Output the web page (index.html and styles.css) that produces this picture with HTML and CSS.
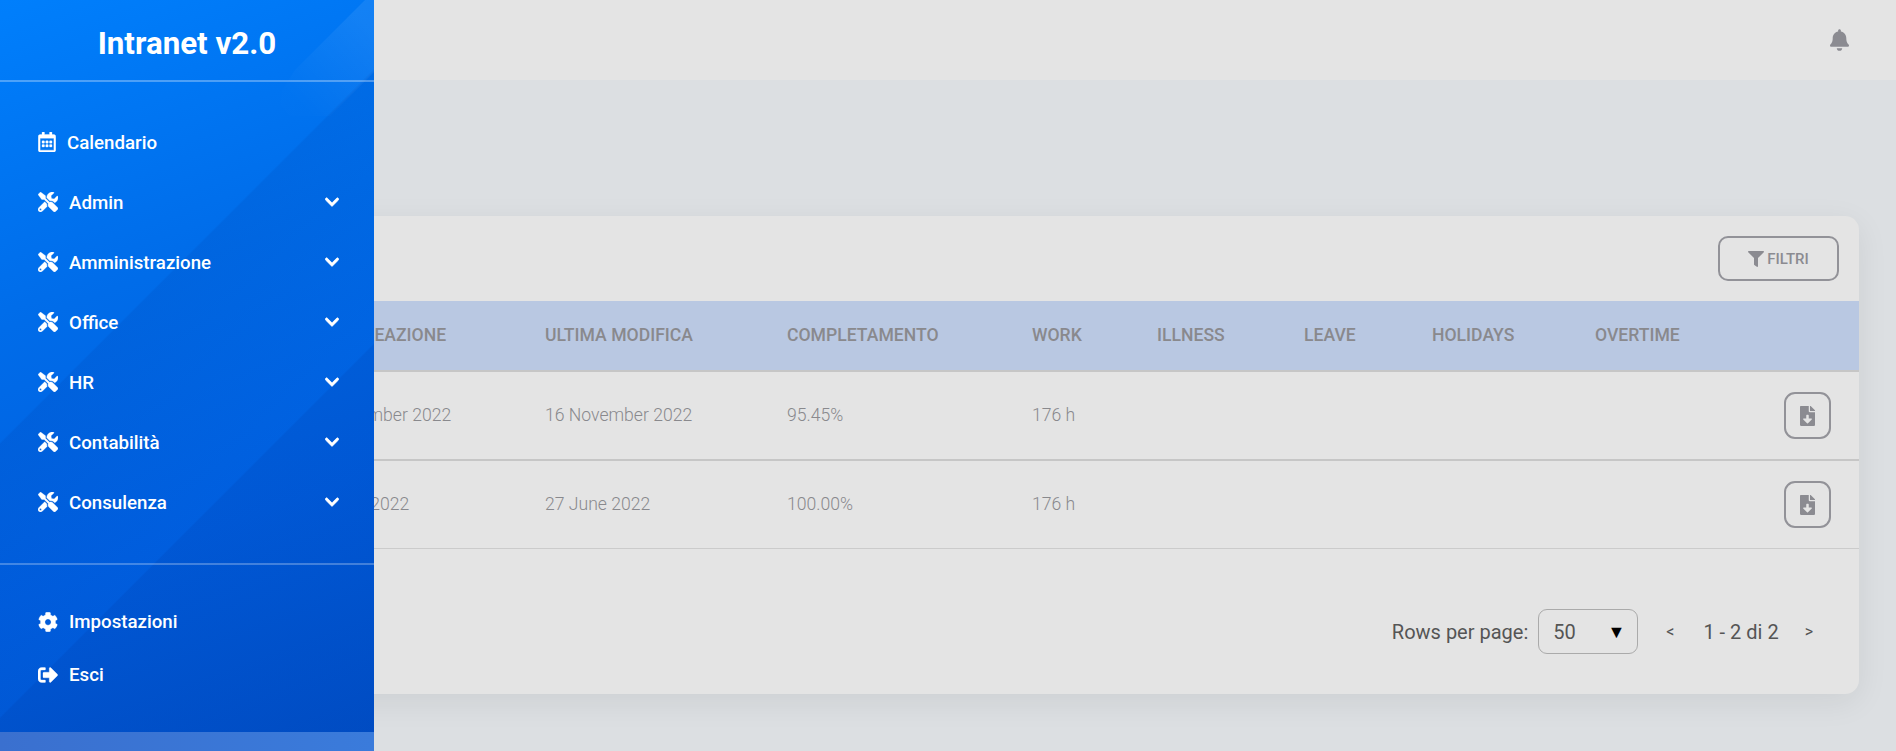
FILE: index.html
```html
<!DOCTYPE html>
<html lang="it">
<head>
<meta charset="utf-8">
<title>Intranet v2.0</title>
<link rel="stylesheet" href="styles.css">
</head>
<body>
<svg class="defs" aria-hidden="true">
  <symbol id="i-cal" viewBox="0 0 448 512"><path d="M148 288h-40c-6.6 0-12-5.4-12-12v-40c0-6.6 5.4-12 12-12h40c6.6 0 12 5.4 12 12v40c0 6.6-5.4 12-12 12zm108-12v-40c0-6.6-5.4-12-12-12h-40c-6.6 0-12 5.4-12 12v40c0 6.6 5.4 12 12 12h40c6.6 0 12-5.4 12-12zm96 0v-40c0-6.6-5.4-12-12-12h-40c-6.6 0-12 5.4-12 12v40c0 6.6 5.4 12 12 12h40c6.6 0 12-5.4 12-12zm-96 96v-40c0-6.6-5.4-12-12-12h-40c-6.6 0-12 5.4-12 12v40c0 6.6 5.4 12 12 12h40c6.6 0 12-5.4 12-12zm-96 0v-40c0-6.6-5.4-12-12-12h-40c-6.6 0-12 5.4-12 12v40c0 6.6 5.4 12 12 12h40c6.6 0 12-5.4 12-12zm192 0v-40c0-6.6-5.4-12-12-12h-40c-6.6 0-12 5.4-12 12v40c0 6.6 5.4 12 12 12h40c6.6 0 12-5.4 12-12zm96-260v352c0 26.5-21.5 48-48 48H48c-26.5 0-48-21.5-48-48V112c0-26.5 21.5-48 48-48h48V12c0-6.6 5.4-12 12-12h40c6.6 0 12 5.4 12 12v52h128V12c0-6.6 5.4-12 12-12h40c6.6 0 12 5.4 12 12v52h48c26.5 0 48 21.5 48 48zm-48 346V160H48v298c0 3.3 2.7 6 6 6h340c3.3 0 6-2.7 6-6z"/></symbol>
  <symbol id="i-tools" viewBox="0 0 512 512"><path d="M501.1 395.7L384 278.6c-23.1-23.1-57.6-27.6-85.4-13.9L192 158.1V96L64 0 0 64l96 128h62.1l106.6 106.6c-13.6 27.8-9.2 62.3 13.9 85.4l117.1 117.1c14.6 14.6 38.2 14.6 52.7 0l52.7-52.7c14.5-14.6 14.5-38.2 0-52.7zM331.7 225c28.3 0 54.9 11 74.9 31l19.4 19.4c15.8-6.9 30.8-16.5 43.8-29.5 37.1-37.1 49.7-89.3 37.9-136.7-2.2-9-13.5-12.1-20.1-5.5l-74.4 74.4-67.9-11.3L334 98.9l74.4-74.4c6.6-6.6 3.4-17.9-5.7-20.2-47.4-11.7-99.6.9-136.6 37.9-28.5 28.5-41.9 66.1-41.2 103.6l82.1 82.1c8.1-1.9 16.5-2.9 24.7-2.9zm-103.9 82l-56.7-56.7L18.7 402.8c-25 25-25 65.5 0 90.5s65.5 25 90.5 0l123.6-123.6c-7.6-19.9-9.9-41.6-5-62.7zM64 472c-13.2 0-24-10.8-24-24 0-13.3 10.7-24 24-24s24 10.7 24 24c0 13.2-10.7 24-24 24z"/></symbol>
  <symbol id="i-chev" viewBox="0 0 448 512"><path d="M207.029 381.476L12.686 187.132c-9.373-9.373-9.373-24.569 0-33.941l22.667-22.667c9.357-9.357 24.522-9.375 33.901-.04L224 284.505l154.745-154.021c9.379-9.335 24.544-9.317 33.901.04l22.667 22.667c9.373 9.373 9.373 24.569 0 33.941L240.971 381.476c-9.373 9.372-24.569 9.372-33.942 0z"/></symbol>
  <symbol id="i-cog" viewBox="0 0 512 512"><path d="M487.4 315.7l-42.6-24.6c4.3-23.2 4.3-47 0-70.2l42.6-24.6c4.9-2.8 7.1-8.6 5.5-14-11.1-35.6-30-67.8-54.7-94.6-3.8-4.1-10-5.1-14.8-2.3L380.8 110c-17.9-15.4-38.5-27.3-60.8-35.1V25.8c0-5.6-3.9-10.5-9.4-11.7-36.7-8.2-74.3-7.8-109.2 0-5.5 1.2-9.4 6.1-9.4 11.7V75c-22.2 7.9-42.8 19.8-60.8 35.1L88.7 85.5c-4.9-2.8-11-1.9-14.8 2.3-24.7 26.7-43.6 58.9-54.7 94.6-1.7 5.4.6 11.2 5.5 14L67.3 221c-4.3 23.2-4.3 47 0 70.2l-42.6 24.6c-4.9 2.8-7.1 8.6-5.5 14 11.1 35.6 30 67.8 54.7 94.6 3.8 4.1 10 5.1 14.8 2.3l42.6-24.6c17.9 15.4 38.5 27.3 60.8 35.1v49.2c0 5.6 3.9 10.5 9.4 11.7 36.7 8.2 74.3 7.8 109.2 0 5.5-1.2 9.4-6.1 9.4-11.7v-49.2c22.2-7.9 42.8-19.8 60.8-35.1l42.6 24.6c4.9 2.8 11 1.9 14.8-2.3 24.7-26.7 43.6-58.9 54.7-94.6 1.5-5.5-.7-11.3-5.6-14.1zM256 336c-44.1 0-80-35.9-80-80s35.9-80 80-80 80 35.9 80 80-35.9 80-80 80z"/></symbol>
  <symbol id="i-out" viewBox="0 0 512 512"><path d="M497 273L329 441c-15 15-41 4.5-41-17v-96H152c-13.3 0-24-10.7-24-24v-96c0-13.3 10.7-24 24-24h136V88c0-21.4 25.9-32 41-17l168 168c9.3 9.4 9.3 24.6 0 34zM192 436v-40c0-6.6-5.4-12-12-12H96c-17.7 0-32-14.3-32-32V160c0-17.7 14.3-32 32-32h84c6.6 0 12-5.4 12-12V76c0-6.6-5.4-12-12-12H96c-53 0-96 43-96 96v192c0 53 43 96 96 96h84c6.6 0 12-5.4 12-12z"/></symbol>
  <symbol id="i-bell" viewBox="0 0 448 512"><path d="M224 512c35.32 0 63.97-28.65 63.97-64H160.03c0 35.35 28.65 64 63.97 64zm215.39-149.71c-19.32-20.76-55.47-51.99-55.47-154.29 0-77.7-54.48-139.9-127.94-155.16V32c0-17.67-14.32-32-31.98-32s-31.98 14.33-31.98 32v20.84C118.56 68.1 64.08 130.3 64.08 208c0 102.3-36.15 133.53-55.47 154.29-6 6.45-8.66 14.16-8.61 21.71.11 16.4 12.98 32 32.1 32h383.8c19.12 0 32-15.6 32.1-32 .05-7.55-2.61-15.27-8.61-21.71z"/></symbol>
  <symbol id="i-filter" viewBox="0 0 512 512"><path d="M487.976 0H24.028C2.71 0-8.047 25.866 7.058 40.971L192 225.941V432c0 7.831 3.821 15.17 10.237 19.662l80 55.98C298.02 518.69 320 507.493 320 487.98V225.941l184.947-184.97C520.021 25.896 509.338 0 487.976 0z"/></symbol>
  <symbol id="i-file" viewBox="0 0 384 512"><path d="M224 136V0H24C10.7 0 0 10.7 0 24v464c0 13.3 10.7 24 24 24h336c13.3 0 24-10.7 24-24V160H248c-13.2 0-24-10.8-24-24zm76.45 211.36l-96.42 95.7c-6.65 6.61-17.39 6.61-24.04 0l-96.42-95.7C73.42 337.29 80.54 320 94.82 320H160v-80c0-8.84 7.16-16 16-16h32c8.84 0 16 7.16 16 16v80h65.18c14.28 0 21.4 17.29 11.27 27.36zM377 105L279.1 7c-4.5-4.5-10.6-7-17-7H256v128h128v-6.1c0-6.3-2.5-12.4-7-16.9z"/></symbol>
</svg>

<div class="app">
  <aside class="sidebar">
    <div class="sidebar-panel">
      <h1 class="brand">Intranet v2.0</h1>
      <nav class="nav-main">
        <a class="nav-item"><svg class="nav-icon nav-icon-cal"><use href="#i-cal"/></svg><span class="nav-label">Calendario</span></a>
        <a class="nav-item"><svg class="nav-icon"><use href="#i-tools"/></svg><span class="nav-label">Admin</span><svg class="chev"><use href="#i-chev"/></svg></a>
        <a class="nav-item"><svg class="nav-icon"><use href="#i-tools"/></svg><span class="nav-label">Amministrazione</span><svg class="chev"><use href="#i-chev"/></svg></a>
        <a class="nav-item"><svg class="nav-icon"><use href="#i-tools"/></svg><span class="nav-label">Office</span><svg class="chev"><use href="#i-chev"/></svg></a>
        <a class="nav-item"><svg class="nav-icon"><use href="#i-tools"/></svg><span class="nav-label">HR</span><svg class="chev"><use href="#i-chev"/></svg></a>
        <a class="nav-item"><svg class="nav-icon"><use href="#i-tools"/></svg><span class="nav-label">Contabilità</span><svg class="chev"><use href="#i-chev"/></svg></a>
        <a class="nav-item"><svg class="nav-icon"><use href="#i-tools"/></svg><span class="nav-label">Consulenza</span><svg class="chev"><use href="#i-chev"/></svg></a>
      </nav>
      <nav class="nav-foot">
        <a class="nav-item nav-item-foot"><svg class="nav-icon"><use href="#i-cog"/></svg><span class="nav-label">Impostazioni</span></a>
        <a class="nav-item nav-item-foot"><svg class="nav-icon"><use href="#i-out"/></svg><span class="nav-label">Esci</span></a>
      </nav>
    </div>
  </aside>

  <main class="main">
    <header class="topbar"><svg class="bell"><use href="#i-bell"/></svg></header>
    <section class="card">
      <div class="card-top">
        <button class="btn-filter"><svg class="filter-icon"><use href="#i-filter"/></svg>FILTRI</button>
      </div>
      <div class="row row-head">
        <span></span><span>DATA CREAZIONE</span><span>ULTIMA MODIFICA</span><span>COMPLETAMENTO</span><span>WORK</span><span>ILLNESS</span><span>LEAVE</span><span>HOLIDAYS</span><span>OVERTIME</span><span></span>
      </div>
      <div class="row row-body row-first">
        <span></span><span>16 November 2022</span><span>16 November 2022</span><span>95.45%</span><span>176 h</span><span></span><span></span><span></span><span></span>
        <button class="btn-file"><svg class="file-icon"><use href="#i-file"/></svg></button>
      </div>
      <div class="row row-body row-last">
        <span></span><span>27 June 2022</span><span>27 June 2022</span><span>100.00%</span><span>176 h</span><span></span><span></span><span></span><span></span>
        <button class="btn-file"><svg class="file-icon"><use href="#i-file"/></svg></button>
      </div>
      <div class="pager">
        <span class="pager-label">Rows per page:</span>
        <div class="select"><span>50</span><span class="select-arrow">▼</span></div>
        <span class="pager-arrow pager-prev">&lt;</span>
        <span class="pager-range">1 - 2 di 2</span>
        <span class="pager-arrow pager-next">&gt;</span>
      </div>
    </section>
  </main>
</div>
</body>
</html>
```

FILE: styles.css
```css
* { box-sizing: border-box; }
html, body { margin: 0; height: 100%; }
body { font-family: Roboto, "Liberation Sans", sans-serif; background: #dcdfe2; overflow: hidden; }
.defs { display: none; }
svg { fill: currentColor; display: block; }

.app { position: relative; height: 751px; overflow: hidden; }

.sidebar {
  position: absolute; left: 0; top: 0; width: 374px; height: 751px;
  background: linear-gradient(90deg, #3a70cf, #3a7bdb);
  color: #fff; z-index: 2;
}
.sidebar-panel {
  position: relative; z-index: 0;
  height: 732px; display: flex; flex-direction: column;
  background:
    linear-gradient(135deg, rgba(0,0,0,0) 40%, rgba(0,20,110,.08) 40.2%, rgba(0,20,110,.02) 64.8%, rgba(0,20,110,.1) 65%),
    linear-gradient(160deg, #007ffc 0%, #006ce9 38%, #005fe0 70%, #0052cc 100%);
}
.sidebar-panel::before {
  content: ""; position: absolute; z-index: -1; right: 0; top: 0; width: 94px; height: 116px;
  clip-path: polygon(85px 0, 94px 0, 94px 72px, 50px 116px, 10px 116px, 0 105px, 2px 90px, 15px 70px);
  background: linear-gradient(45deg, rgba(255,255,255,.005) 15%, rgba(255,255,255,.075) 85%);
}
.brand {
  margin: 0; height: 82px; line-height: 88px; text-align: center;
  font-size: 31.3px; font-weight: 700;
  border-bottom: 2px solid rgba(255,255,255,.3);
}
.nav-main {
  padding-top: 30px; height: 483px; flex: none;
  border-bottom: 2px solid rgba(255,255,255,.26);
}
.nav-item { display: flex; align-items: center; height: 60px; padding: 0 35px 0 38px; }
.nav-icon { width: 20px; height: 20px; flex: none; stroke: currentColor; stroke-width: 8px; }
.nav-icon-cal { width: 18px; height: 20px; }
.nav-label { margin-left: 11px; padding-top: 2px; font-size: 18.7px; font-weight: 500; flex: 1; }
.chev { width: 14px; height: 16px; flex: none; stroke: currentColor; stroke-width: 24px; }
.nav-foot { padding-top: 30px; }
.nav-item-foot { height: 53px; }
.nav-item-foot .nav-label { padding-top: 0; }

.main { display: flex; flex-direction: column; height: 100%; }
.topbar {
  height: 80px; flex: none; background: #e4e4e4;
  display: flex; justify-content: flex-end; align-items: center;
  padding: 0 47px 0 0; color: #8b8b91;
}
.bell { width: 19px; height: 22px; }

.card {
  margin: 136px 37px 0 40px; height: 478px; background: #e4e4e4;
  border-radius: 14px; box-shadow: 0 8px 32px rgba(0,0,0,.07);
  display: flex; flex-direction: column;
}
.card-top { height: 85px; flex: none; display: flex; justify-content: flex-end; align-items: flex-start; padding: 20px 20px 0 0; }
.btn-filter {
  width: 121px; height: 45px; border: 2px solid #929298; border-radius: 10px;
  background: none; color: #8b8b91; font: 500 15px Roboto, sans-serif;
  display: flex; align-items: center; justify-content: center; gap: 3px; padding: 0;
}
.filter-icon { width: 16px; height: 16px; }

.row {
  display: grid; align-items: center; font-size: 17.6px; color: #89898d;
  grid-template-columns: 264px 241px 242px 245px 125px 147px 128px 163px 1fr 46px;
  padding-right: 29px;
}
.row-head { height: 71px; background: #b9c8e2; font-weight: 500; border-bottom: 2px solid #c6c6c6; flex: none; padding-bottom: 2px; }
.row-body { font-weight: 300; flex: none; }
.row-body > span { padding-bottom: 2px; }
.row-first { height: 89px; border-bottom: 2px solid #c6c6c6; }
.row-last { height: 88px; border-bottom: 1px solid #cbcbcb; }
.btn-file {
  width: 47px; height: 47px; border: 2px solid #929298; border-radius: 11px;
  background: none; color: #8b8b91; display: flex; align-items: center; justify-content: center; padding: 0;
}
.file-icon { width: 15px; height: 20px; }

.pager {
  flex: 1; display: flex; justify-content: flex-end; align-items: center;
  padding: 20px 46px 0 0; color: #555; font-size: 20px;
}
.select {
  width: 100px; height: 45px; margin-left: 10px; border: 1px solid #aaa; border-radius: 9px;
  display: flex; justify-content: space-between; align-items: center; padding: 0 12px 0 14px;
}
.select-arrow { color: #000; font-size: 18px; }
.pager-arrow { font-size: 16px; }
.pager-prev { margin-left: 28px; }
.pager-range { margin: 0 26px 0 29px; }
```
